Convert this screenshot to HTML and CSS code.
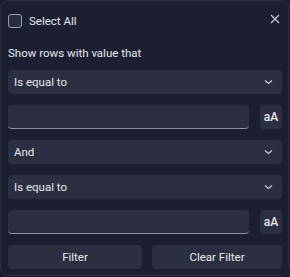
FILE: index.html
```html
<!DOCTYPE html>
<html lang="en">
<head>
    <meta charset="UTF-8">
    <title>Filter</title>
    <link rel="stylesheet" href="styles.css">
</head>
<body>
    <div class="filter-panel">
        <div class="filter-top">
            <label class="select-all">
                <span class="check-box"></span>
                <span>Select All</span>
            </label>
            <span class="close-btn">
                <svg width="10" height="10" viewBox="0 0 10 10"><path d="M1 1L9 9M9 1L1 9" stroke="#c9cad3" stroke-width="1.2" fill="none"/></svg>
            </span>
        </div>
        <div class="filter-caption">Show rows with value that</div>

        <div class="drop">
            <span>Is equal to</span>
            <svg class="chev" width="9" height="6" viewBox="0 0 9 6"><path d="M1 1.5L4.5 4.5L8 1.5" stroke="#c9cad3" stroke-width="1.2" fill="none"/></svg>
        </div>
        <div class="input-row">
            <div class="text-box"></div>
            <div class="case-btn">aA</div>
        </div>
        <div class="drop">
            <span>And</span>
            <svg class="chev" width="9" height="6" viewBox="0 0 9 6"><path d="M1 1.5L4.5 4.5L8 1.5" stroke="#c9cad3" stroke-width="1.2" fill="none"/></svg>
        </div>
        <div class="drop">
            <span>Is equal to</span>
            <svg class="chev" width="9" height="6" viewBox="0 0 9 6"><path d="M1 1.5L4.5 4.5L8 1.5" stroke="#c9cad3" stroke-width="1.2" fill="none"/></svg>
        </div>
        <div class="input-row">
            <div class="text-box"></div>
            <div class="case-btn">aA</div>
        </div>
        <div class="button-row">
            <div class="btn btn-filter">Filter</div>
            <div class="btn btn-clear">Clear Filter</div>
        </div>
    </div>
</body>
</html>
```

FILE: styles.css
```css
body {
    margin: 0;
    padding: 0;
    background-color: #1a1d2c;
    font-family: Roboto, "Open Sans", sans-serif;
    font-size: 11.5px;
    color: #e6e7ee;
}

.filter-panel {
    box-sizing: border-box;
    width: 289px;
    height: 276px;
    padding: 0 6px 0 7px;
    border: 1px solid #2b2e3f;
    border-radius: 8px;
    background-color: #1c1f30;
}

.filter-top {
    display: flex;
    align-items: center;
    justify-content: space-between;
    height: 26px;
    margin-top: 7px;
}

.select-all {
    display: flex;
    align-items: center;
    gap: 7px;
}

.check-box {
    box-sizing: border-box;
    width: 14px;
    height: 14px;
    border: 1px solid #9a9cab;
    border-radius: 3px;
    background-color: #2a2d3d;
}

.close-btn {
    display: flex;
    margin-right: 2px;
    margin-top: -4px;
}

.filter-caption {
    margin-top: 11px;
    height: 17px;
    line-height: 17px;
}

.drop {
    box-sizing: border-box;
    display: flex;
    align-items: center;
    justify-content: space-between;
    height: 24px;
    padding: 0 9px 0 6px;
    border-radius: 4px;
    background-color: #2c2f3f;
    margin-top: 11px;
}

.filter-caption + .drop {
    margin-top: 8px;
}

.input-row {
    display: flex;
    gap: 11px;
    margin-top: 11px;
}

.text-box {
    box-sizing: border-box;
    flex: 1;
    height: 24px;
    border-radius: 4px;
    background-color: #2c2f3f;
    border-bottom: 1px solid #8e909c;
}

.case-btn {
    box-sizing: border-box;
    width: 22px;
    height: 24px;
    border-radius: 4px;
    background-color: #2c2f3f;
    display: flex;
    align-items: center;
    justify-content: center;
    font-size: 12px;
    font-weight: 500;
}

.button-row {
    display: flex;
    justify-content: space-between;
    margin-top: 11px;
}

.btn {
    height: 24px;
    line-height: 24px;
    text-align: center;
    border-radius: 4px;
    background-color: #2c2f3f;
}

.btn-filter {
    width: 134px;
}

.btn-clear {
    width: 130px;
}
```
